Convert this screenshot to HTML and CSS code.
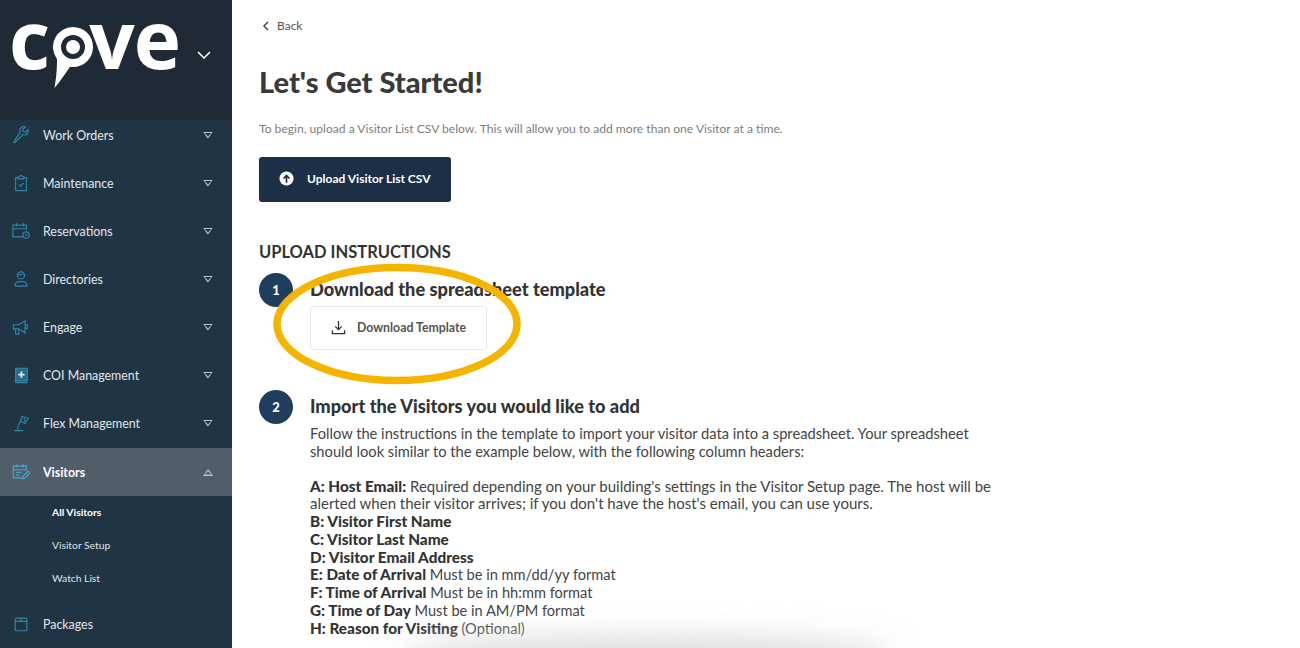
FILE: index.html
```html
<!DOCTYPE html>
<html lang="en">
<head>
  <meta charset="UTF-8">
  <title>Let's Get Started!</title>
  <link rel="stylesheet" href="styles.css">
</head>
<body>
  <div class="app">
    <aside class="sidebar">
      <div class="brand">
        <div class="logo">
          <span>c</span>
          <svg class="logo-pin" viewBox="0 0 40 62" width="40" height="62">
            <path fill="#fff" fill-rule="evenodd" d="M20 0a20 20 0 0 1 0 40c-1 0-2 0-3-.2C12 47 7 55 1.500 61 3 52 4 44 4 32A20 20 0 0 1 20 0zm0 8a12 12 0 1 0 0 24 12 12 0 0 0 0-24z"/>
            <circle cx="20" cy="20" r="7" fill="#fff"/>
          </svg>
          <span>ve</span>
        </div>
        <svg class="brand-caret" viewBox="0 0 14 8" width="14" height="8"><path d="M1 1l6 6 6-6" fill="none" stroke="#fff" stroke-width="1.500"/></svg>
      </div>
      <nav class="nav">
        <a class="nav-item">
          <svg class="nav-icon" viewBox="0 0 20 20"><path d="M2 17.500l1 1 9-9c2 .8 4 .4 5-1 1-1.300 1.300-3 .6-4.500l-2.800 2.800-2.300-.6-.6-2.300L14.700 1c-1.500-.7-3.300-.4-4.500.7-1.300 1.300-1.700 3.200-1 5z"/></svg>
          <span class="nav-label">Work Orders</span><span class="tri"></span>
        </a>
        <a class="nav-item">
          <svg class="nav-icon" viewBox="0 0 20 20"><path d="M7 4H4v14.500h12V4h-3M7 5.500V3.500l3-2 3 2v2z"/><path d="M7.500 11.500l2 2 3.500-3.500"/></svg>
          <span class="nav-label">Maintenance</span><span class="tri"></span>
        </a>
        <a class="nav-item">
          <svg class="nav-icon" viewBox="0 0 20 20"><path d="M12 16.500H1V3.500h15V9M1 7.500h15M5 1.500v3.500M12.500 1.500v3.500"/><circle cx="15.500" cy="14.500" r="3.500"/><path d="M15.500 12.800v1.700h1.500"/></svg>
          <span class="nav-label">Reservations</span><span class="tri"></span>
        </a>
        <a class="nav-item">
          <svg class="nav-icon" viewBox="0 0 20 20"><circle cx="10" cy="6" r="4"/><path d="M7 5c2 1 4 .5 6-1M3.500 18v-1.500c0-2 2-3.500 4-3.500h5c2 0 4 1.500 4 3.500V18z"/></svg>
          <span class="nav-label">Directories</span><span class="tri"></span>
        </a>
        <a class="nav-item">
          <svg class="nav-icon" viewBox="0 0 20 20"><path d="M1.500 7.500h6L14.500 3v13.500L7.500 12h-6zM4 12v6h3.500v-6M14.500 7.500h2.500v4h-2.500"/></svg>
          <span class="nav-label">Engage</span><span class="tri"></span>
        </a>
        <a class="nav-item">
          <svg class="nav-icon" viewBox="0 0 20 20"><path class="shade" d="M4 16.500V2.500h13v14z"/><path d="M4 16.500v2h13"/><path class="fill" d="M9.500 6h2v2.500H14v2h-2.500V13h-2v-2.500H7v-2h2.500z"/></svg>
          <span class="nav-label">COI Management</span><span class="tri"></span>
        </a>
        <a class="nav-item">
          <svg class="nav-icon" viewBox="0 0 20 20"><path d="M2.500 18.500h10M6.500 18.500V14l3-6.500M9.500 7.500l1.500-5 7 2.500-3.500 5.500z"/><path d="M13 5l1.500 1.500-.5 2"/></svg>
          <span class="nav-label">Flex Management</span><span class="tri"></span>
        </a>
        <a class="nav-item is-open">
          <svg class="nav-icon" viewBox="0 0 20 20"><path d="M11 16.500H1.500V3.500H16V8M1.500 7.500H16M5.500 1.500v3.500M12.500 1.500v3.500M4.500 10.500h6M4.500 13.500h3.500"/><path d="M11.500 17.500l.5-2.500 6-6 2 2-6 6z"/></svg>
          <span class="nav-label">Visitors</span><span class="tri tri-up"></span>
        </a>
        <div class="subnav">
          <a class="sub-item is-active">All Visitors</a>
          <a class="sub-item">Visitor Setup</a>
          <a class="sub-item">Watch List</a>
        </div>
        <a class="nav-item">
          <svg class="nav-icon" viewBox="0 0 20 20"><path d="M3.500 7h13v9a1.500 1.500 0 0 1-1.500 1.500H5A1.500 1.500 0 0 1 3.500 16zM3.500 7V5A1.500 1.500 0 0 1 5 3.500h10A1.500 1.500 0 0 1 16.500 5v2M10 3.500V7"/></svg>
          <span class="nav-label">Packages</span>
        </a>
      </nav>
    </aside>

    <main class="content">
      <a class="back">
        <svg viewBox="0 0 8 10" width="8" height="10"><path d="M6 1L2 5l4 4" fill="none" stroke="#444" stroke-width="1.500"/></svg>
        Back
      </a>
      <h1 class="title">Let's Get Started!</h1>
      <p class="intro">To begin, upload a Visitor List CSV below. This will allow you to add more than one Visitor at a time.</p>
      <button class="btn-upload">
        <svg viewBox="0 0 16 16" width="15" height="15"><circle cx="8" cy="8" r="7.500" fill="#fff"/><path d="M8 12.500V5M4.800 8L8 4.800 11.200 8" fill="none" stroke="#1c2f47" stroke-width="1.800"/></svg>
        Upload Visitor List CSV
      </button>
      <h2 class="section-title">UPLOAD INSTRUCTIONS</h2>

      <section class="step step-one">
        <div class="step-num">1</div>
        <div class="step-body">
          <h3 class="step-title">Download the spreadsheet template</h3>
          <button class="btn-download">
            <svg viewBox="0 0 16 16" width="15" height="15"><path d="M8 1v9M4.500 6.800L8 10.300l3.500-3.500M1.500 11v3.500h13V11" fill="none" stroke="#333" stroke-width="1.400"/></svg>
            Download Template
          </button>
        </div>
        <svg class="oval" viewBox="0 0 250 124" width="250" height="124"><ellipse cx="125" cy="62" rx="120" ry="56.500" fill="none" stroke="#f5b400" stroke-width="7.500"/></svg>
      </section>

      <section class="step">
        <div class="step-num">2</div>
        <div class="step-body">
          <h3 class="step-title">Import the Visitors you would like to add</h3>
          <p class="step-text">Follow the instructions in the template to import your visitor data into a spreadsheet. Your spreadsheet should look similar to the example below, with the following column headers:</p>
          <ul class="columns">
            <li><b>A: Host Email:</b> Required depending on your building's settings in the Visitor Setup page. The host will be alerted when their visitor arrives; if you don't have the host's email, you can use yours.</li>
            <li><b>B: Visitor First Name</b></li>
            <li><b>C: Visitor Last Name</b></li>
            <li><b>D: Visitor Email Address</b></li>
            <li><b>E: Date of Arrival</b> Must be in mm/dd/yy format</li>
            <li><b>F: Time of Arrival</b> Must be in hh:mm format</li>
            <li><b>G: Time of Day</b> Must be in AM/PM format</li>
            <li><b>H: Reason for Visiting</b> (Optional)</li>
          </ul>
        </div>
      </section>
      <div class="bottom-shade"></div>
    </main>
  </div>
</body>
</html>
```

FILE: styles.css
```css
* {
  box-sizing: border-box;
}
html, body {
  margin: 0;
  height: 648px;
  overflow: hidden;
}
body {
  font-family: Lato, "Open Sans", sans-serif;
  color: #333;
  background: #fff;
}
.app {
  display: flex;
  height: 648px;
}
.sidebar {
  width: 232px;
  flex: none;
  background: #203444;
  overflow: hidden;
}
.brand {
  position: relative;
  z-index: 1;
  height: 120px;
  background: #1e2a35;
  display: flex;
  align-items: flex-start;
  padding: 0 21px 0 9px;
}
.logo {
  display: flex;
  align-items: flex-start;
  color: #fff;
  font-family: "Open Sans", sans-serif;
  font-weight: 700;
  font-size: 80px;
  line-height: 76px;
  letter-spacing: -1px;
}
.logo-pin {
  margin: 27px -4px 0 4px;
}
.brand-caret {
  margin: 51px 0 0 auto;
}
.nav {
  margin-top: -9px;
}
.nav-item {
  display: flex;
  align-items: center;
  height: 48px;
  padding: 0 19px 0 12px;
  color: #e3e8eb;
  font-size: 12.400px;
}
.nav-icon {
  width: 18px;
  height: 18px;
  flex: none;
  margin-right: 13px;
  fill: none;
  stroke: #2f86a8;
  stroke-width: 1.300;
}
.nav-icon .shade {
  fill: #2a6a86;
}
.nav-icon .fill {
  fill: #dcebf2;
  stroke: none;
}
.nav-label {
  flex: 1;
}
.tri {
  width: 10px;
  height: 7px;
  background: #b9c0c5;
  clip-path: polygon(0 0, 100% 0, 50% 100%, 40% 85%, 50% 70%, 82% 22%, 18% 22%, 50% 70%, 40% 85%);
}
.tri-up {
  transform: rotate(180deg);
}
.is-open {
  margin-top: 1px;
  background: #505e6a;
  color: #fff;
  font-weight: 700;
}
.is-open .nav-icon {
  stroke: #4aa6d0;
}
.subnav {
  margin-top: -1px;
  padding: 0 0 6px;
}
.sub-item {
  display: flex;
  align-items: center;
  height: 33px;
  padding-left: 52px;
  color: #dfe4e7;
  font-size: 10.300px;
}
.sub-item.is-active {
  color: #fff;
  font-weight: 700;
}

.content {
  position: relative;
  flex: 1;
  padding: 18px 0 0 27px;
}
.back {
  display: flex;
  align-items: center;
  gap: 7px;
  height: 15px;
  font-size: 12px;
  color: #555;
  padding-left: 3px;
}
.title {
  margin: 31px 0 0;
  font-size: 29px;
  line-height: 36px;
  font-weight: 900;
  color: #3a3a3a;
}
.intro {
  margin: 20px 0 0;
  font-size: 12.100px;
  line-height: 18px;
  color: #7d7d7d;
}
.btn-upload {
  display: flex;
  align-items: center;
  gap: 13px;
  width: 192px;
  height: 45px;
  margin-top: 19px;
  padding: 0 0 2px 20px;
  background: #1c2f47;
  color: #fff;
  border: none;
  border-radius: 3px;
  font-family: inherit;
  font-size: 12px;
  font-weight: 700;
}
.section-title {
  margin: 40px 0 0;
  font-size: 16.500px;
  line-height: 20px;
  font-weight: 700;
  color: #333;
}
.step {
  position: relative;
  display: flex;
  gap: 17px;
  margin-top: 11px;
}
.step-one {
  height: 106px;
}
.step-num {
  width: 34px;
  height: 34px;
  flex: none;
  border-radius: 50%;
  background: #1f3d5c;
  color: #fff;
  font-size: 13px;
  font-weight: 900;
  text-align: center;
  line-height: 34px;
}
.step-body {
  width: 690px;
}
.step-title {
  margin: 6px 0 0;
  font-size: 18.200px;
  line-height: 21px;
  font-weight: 900;
  color: #333;
}
.btn-download {
  display: flex;
  align-items: center;
  gap: 11px;
  width: 177px;
  height: 44px;
  margin-top: 6px;
  padding: 0 0 2px 20px;
  background: #fff;
  color: #555;
  border: 1px solid #e8e8e8;
  border-radius: 3px;
  font-family: inherit;
  font-size: 12.300px;
  font-weight: 700;
}
.oval {
  position: absolute;
  left: 13px;
  top: -11px;
}
.step-text {
  margin: 7px 0 0;
  font-size: 14.700px;
  line-height: 18px;
  color: #444;
}
.columns {
  list-style: none;
  margin: 17.500px 0 0;
  padding: 0;
  font-size: 14.600px;
  line-height: 17.800px;
  color: #444;
}
.columns li:first-child {
  font-size: 15px;
}
.columns b {
  font-size: 15.300px;
  font-weight: 900;
  color: #333;
}
.bottom-shade {
  position: absolute;
  left: 170px;
  bottom: -24px;
  width: 490px;
  height: 36px;
  border-radius: 50%;
  background: #dcdcdc;
  filter: blur(14px);
}
```
